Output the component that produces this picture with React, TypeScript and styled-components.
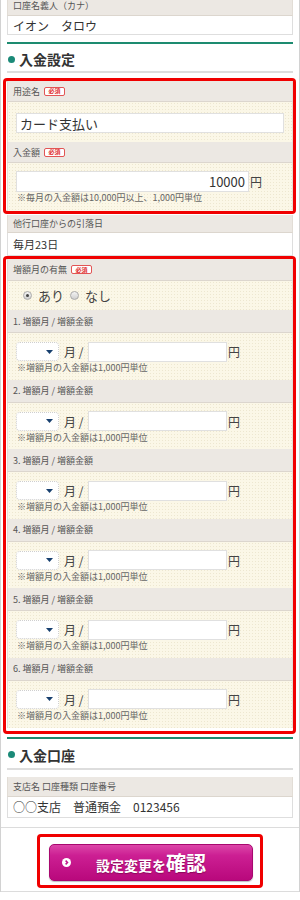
import styled, { createGlobalStyle } from "styled-components";

const GlobalStyle = createGlobalStyle`
  * {
    box-sizing: border-box;
  }
  body {
    margin: 0;
    background: #fff;
    font-family: "Noto Sans CJK JP", "Noto Sans", sans-serif;
    color: #333;
  }
`;

const Frame = styled.div`
  width: 300px;
  border-left: 1px solid #d2d2d2;
  border-right: 1px solid #d2d2d2;
  padding: 0 6px;
  overflow: hidden;
`;

const Field = styled.div<{ $mt?: number }>`
  margin-top: ${(p) => p.$mt ?? 0}px;
`;

const Label = styled.div<{ $h?: number; $mt?: number }>`
  display: flex;
  align-items: center;
  gap: 4px;
  height: ${(p) => p.$h ?? 21}px;
  margin-top: ${(p) => p.$mt ?? 0}px;
  padding-left: 5px;
  background: #ece8e3;
  border-left: 1px solid #e2ddd6;
  border-right: 1px solid #e2ddd6;
  border-bottom: 1px solid #dcd6ce;
  font-size: 9px;
  color: #555;
  white-space: nowrap;
`;

const Value = styled.div<{ $h?: number }>`
  display: flex;
  align-items: center;
  height: ${(p) => p.$h ?? 22}px;
  padding-left: 5px;
  background: #fff;
  border: 1px solid #dedede;
  border-top: none;
  font-size: ${(p) => ((p.$h ?? 22) > 22 ? 11 : 12)}px;
  color: #333;
  white-space: pre;
`;

const Badge = styled.span`
  display: inline-flex;
  align-items: center;
  justify-content: center;
  width: 21px;
  height: 9px;
  border: 1px solid #e25555;
  border-radius: 2px;
  background: #fff;
  color: #e03030;
  font-size: 6px;
  font-weight: bold;
  line-height: 1;
`;

const SectionHead = styled.h2<{ $mt: number; $lh?: number }>`
  display: flex;
  align-items: center;
  gap: 4px;
  margin: ${(p) => p.$mt}px 0 0;
  padding: 3px 0 0 1px;
  line-height: ${(p) => p.$lh ?? 24}px;
  border-top: 2px solid #1d8b70;
  border-bottom: 2px solid #dddddd;
  font-size: 14px;
  font-weight: bold;
  color: #333;
`;

const Dot = styled.span`
  width: 7px;
  height: 7px;
  border-radius: 50%;
  background: #1b8a78;
`;

const Highlight = styled.div<{ $mt?: number; $pb?: number }>`
  margin: ${(p) => p.$mt ?? 0}px -3px 0 -4px;
  padding: 0 0 ${(p) => p.$pb ?? 0}px 1px;
  border: 3px solid #f00000;
  border-radius: 4px;
`;

const Panel = styled.div<{ $h: number; $pt: number }>`
  height: ${(p) => p.$h}px;
  padding: ${(p) => p.$pt}px 8px 0;
  background-color: #fbf7e7;
  background-image: radial-gradient(rgba(190, 175, 130, 0.22) 0.7px, transparent 1px);
  background-size: 3px 3px;
  border-left: 1px solid #e6e1d6;
  border-right: 1px solid #e6e1d6;
`;

const TextInput = styled.input<{ $w: number; $h: number; $align?: string }>`
  display: block;
  width: ${(p) => p.$w}px;
  height: ${(p) => p.$h}px;
  margin: 0;
  padding: 0 3px;
  border: 1px solid #e0e0e0;
  background: #fff;
  font-family: inherit;
  font-size: 13px;
  color: #333;
  text-align: ${(p) => p.$align ?? "left"};
  outline: none;
`;

const InputRow = styled.div`
  display: flex;
  align-items: center;
  height: 21px;
`;

const Unit = styled.span<{ $w?: number }>`
  display: inline-block;
  width: ${(p) => (p.$w ? `${p.$w}px` : "auto")};
  margin-left: 1px;
  font-size: 12px;
  color: #444;
  white-space: pre;
`;

const Note = styled.p`
  margin: 0;
  padding-left: 1px;
  font-size: 9px;
  line-height: 12px;
  color: #666;
  white-space: nowrap;
`;

const RadioGroup = styled.div`
  display: flex;
  align-items: center;
  height: 29px;
  padding-left: 15px;
  background-color: #fbf7e7;
  background-image: radial-gradient(rgba(190, 175, 130, 0.22) 0.7px, transparent 1px);
  background-size: 3px 3px;
  border-left: 1px solid #e6e1d6;
  border-right: 1px solid #e6e1d6;
  font-size: 13px;
  color: #444;
`;

const Radio = styled.span<{ $on?: boolean }>`
  display: inline-flex;
  align-items: center;
  justify-content: center;
  width: 9px;
  height: 9px;
  margin-right: 6px;
  border: 1px solid #aaa;
  border-radius: 50%;
  background: linear-gradient(#f4f4f4, #cfcfcf);
  &::after {
    content: "";
    width: 3px;
    height: 3px;
    border-radius: 50%;
    background: ${(p) => (p.$on ? "#444" : "transparent")};
  }
`;

const RadioText = styled.span`
  margin-right: 6px;
`;

const Select = styled.div`
  display: flex;
  align-items: center;
  justify-content: flex-end;
  width: 43px;
  height: 19px;
  margin-right: 4px;
  padding-right: 5px;
  border: 1px dotted #cfcfcf;
  border-radius: 4px;
  background: #fff;
`;

const ButtonArea = styled.div`
  display: flex;
  justify-content: center;
  margin: 9px -6px 0;
  padding: 6px 0 3px;
  border-top: 1px solid #dcdcdc;
  border-bottom: 1px solid #dcdcdc;
`;

const ButtonFrame = styled.div`
  padding: 7px 7px 4px 9px;
  border: 3px solid #f00000;
  border-radius: 4px;
`;

const Button = styled.button`
  display: grid;
  grid-template-columns: 1fr auto 1fr;
  align-items: center;
  width: 204px;
  height: 37px;
  padding: 0 12px;
  border: 1px solid #a8086f;
  border-radius: 5px;
  background: linear-gradient(#dc46a8 0%, #cc1f93 30%, #b9087c 100%);
  box-shadow: 0 1px 1px rgba(0, 0, 0, 0.25);
  color: #fff;
  font-family: inherit;
  font-weight: bold;
  font-size: 14px;
  text-shadow: 0 1px 1px rgba(90, 0, 50, 0.5);
  cursor: pointer;
`;

const BigWord = styled.span`
  font-size: 20px;
`;

const Chevron = () => (
  <svg width="9" height="9" viewBox="0 0 9 9">
    <circle cx="4.5" cy="4.5" r="4.5" fill="#fff" />
    <path d="M3.6 2.6 L5.5 4.5 L3.6 6.4" stroke="#c0138a" strokeWidth="1.5" fill="none" />
  </svg>
);

const Arrow = () => (
  <svg width="7" height="4" viewBox="0 0 7 4">
    <path d="M0 0 H7 L3.5 4 Z" fill="#173f6e" />
  </svg>
);

const increases = [1, 2, 3, 4, 5, 6];

function App() {
  return (
    <>
      <GlobalStyle />
      <Frame>
        <Field>
          <Label $mt={-5}>口座名義人（カナ）</Label>
          <Value $h={19}>イオン　タロウ</Value>
        </Field>

        <SectionHead $mt={7}>
          <Dot />
          入金設定
        </SectionHead>

        <Highlight $mt={5}>
          <Label>
            用途名<Badge>必須</Badge>
          </Label>
          <Panel $h={40} $pt={11}>
            <TextInput $w={268} $h={20} readOnly value="カード支払い" />
          </Panel>
          <Label>
            入金額<Badge>必須</Badge>
          </Label>
          <Panel $h={48} $pt={8}>
            <InputRow>
              <TextInput $w={233} $h={21} $align="right" readOnly value="10000" />
              <Unit>円</Unit>
            </InputRow>
            <Note>※毎月の入金額は10,000円以上、1,000円単位</Note>
          </Panel>
        </Highlight>

        <Field $mt={1}>
          <Label $h={18}>他行口座からの引落日</Label>
          <Value $h={23}>毎月23日</Value>
        </Field>

        <Highlight $pb={3}>
          <Label $h={22}>
            増額月の有無<Badge>必須</Badge>
          </Label>
          <RadioGroup>
            <Radio $on />
            <RadioText>あり</RadioText>
            <Radio />
            <RadioText>なし</RadioText>
          </RadioGroup>
          {increases.map((n) => (
            <div key={n}>
              <Label $h={23}>{n}. 増額月 / 増額金額</Label>
              <Panel $h={46.6} $pt={8}>
                <InputRow>
                  <Select>
                    <Arrow />
                  </Select>
                  <Unit $w={24}>月 /</Unit>
                  <TextInput $w={139} $h={20} readOnly value="" />
                  <Unit>円</Unit>
                </InputRow>
                <Note>※増額月の入金額は1,000円単位</Note>
              </Panel>
            </div>
          ))}
        </Highlight>

        <SectionHead $mt={3} $lh={26}>
          <Dot />
          入金口座
        </SectionHead>

        <Field $mt={7}>
          <Label $h={20}>支店名 口座種類 口座番号</Label>
          <Value $h={21}>○○支店　普通預金　0123456</Value>
        </Field>

        <ButtonArea>
          <ButtonFrame>
            <Button type="button">
              <Chevron />
              <span>
                設定変更を<BigWord>確認</BigWord>
              </span>
              <span />
            </Button>
          </ButtonFrame>
        </ButtonArea>
      </Frame>
    </>
  );
}

export default App;
